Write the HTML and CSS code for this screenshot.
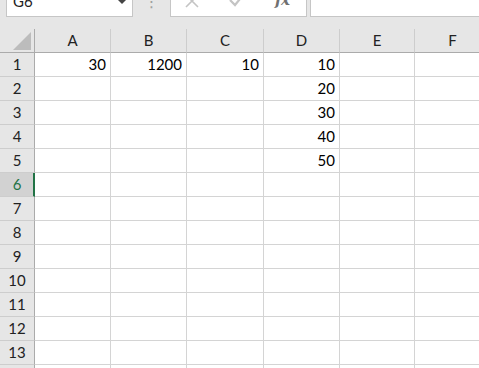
FILE: index.html
```html
<!DOCTYPE html>
<html>
<head>
<meta charset="utf-8">
<link rel="stylesheet" href="styles.css">
</head>
<body>
<div class="app">
  <div class="fbar">
    <div class="namebox"><span class="ref">G6</span><span class="caret"></span></div>
    <div class="dots">⋮</div>
    <div class="btnbox">
      <svg class="ico x" width="16" height="16" viewBox="0 0 16 16"><path d="M2 2 L14 14 M14 2 L2 14" stroke="#c4c4c4" stroke-width="1.6" fill="none"/></svg>
      <svg class="ico ok" width="18" height="16" viewBox="0 0 18 16"><path d="M2 8 L7 13 L16 2" stroke="#c4c4c4" stroke-width="2.2" fill="none"/></svg>
      <span class="fx">fx</span>
    </div>
    <div class="input"></div>
  </div>
  <div class="grid">
    <div class="corner"><span class="tri"></span></div>
    <div class="ch">A</div><div class="ch">B</div><div class="ch">C</div><div class="ch">D</div><div class="ch">E</div><div class="ch">F</div>

    <div class="rh">1</div><div class="c">30</div><div class="c">1200</div><div class="c">10</div><div class="c">10</div><div class="c"></div><div class="c"></div>
    <div class="rh">2</div><div class="c"></div><div class="c"></div><div class="c"></div><div class="c">20</div><div class="c"></div><div class="c"></div>
    <div class="rh">3</div><div class="c"></div><div class="c"></div><div class="c"></div><div class="c">30</div><div class="c"></div><div class="c"></div>
    <div class="rh">4</div><div class="c"></div><div class="c"></div><div class="c"></div><div class="c">40</div><div class="c"></div><div class="c"></div>
    <div class="rh">5</div><div class="c"></div><div class="c"></div><div class="c"></div><div class="c">50</div><div class="c"></div><div class="c"></div>
    <div class="rh sel">6</div><div class="c"></div><div class="c"></div><div class="c"></div><div class="c"></div><div class="c"></div><div class="c"></div>
    <div class="rh">7</div><div class="c"></div><div class="c"></div><div class="c"></div><div class="c"></div><div class="c"></div><div class="c"></div>
    <div class="rh">8</div><div class="c"></div><div class="c"></div><div class="c"></div><div class="c"></div><div class="c"></div><div class="c"></div>
    <div class="rh">9</div><div class="c"></div><div class="c"></div><div class="c"></div><div class="c"></div><div class="c"></div><div class="c"></div>
    <div class="rh">10</div><div class="c"></div><div class="c"></div><div class="c"></div><div class="c"></div><div class="c"></div><div class="c"></div>
    <div class="rh">11</div><div class="c"></div><div class="c"></div><div class="c"></div><div class="c"></div><div class="c"></div><div class="c"></div>
    <div class="rh">12</div><div class="c"></div><div class="c"></div><div class="c"></div><div class="c"></div><div class="c"></div><div class="c"></div>
    <div class="rh">13</div><div class="c"></div><div class="c"></div><div class="c"></div><div class="c"></div><div class="c"></div><div class="c"></div>
    <div class="rh">14</div><div class="c"></div><div class="c"></div><div class="c"></div><div class="c"></div><div class="c"></div><div class="c"></div>
  </div>
</div>
</body>
</html>
```

FILE: styles.css
```css
html, body {
  margin: 0;
  padding: 0;
  background: #e6e6e6;
  overflow: hidden;
}
.app {
  width: 479px;
  height: 368px;
  overflow: hidden;
  font-family: Lato, "Open Sans", sans-serif;
  color: #000;
}
.fbar {
  height: 29px;
  display: flex;
  align-items: flex-start;
  background: #e6e6e6;
}
.namebox {
  box-sizing: border-box;
  margin-top: -10px;
  margin-left: 6px;
  width: 127px;
  height: 27px;
  background: #fff;
  border: 1px solid #c6c6c6;
  position: relative;
  font-size: 15px;
}
.ref {
  position: absolute;
  left: 6px;
  top: 1px;
  color: #222;
}
.caret {
  position: absolute;
  left: 111px;
  top: 9px;
  width: 0;
  height: 0;
  border-left: 4px solid transparent;
  border-right: 4px solid transparent;
  border-top: 4px solid #444;
}
.dots {
  width: 37px;
  text-align: center;
  margin-top: -6px;
  color: #a0a0a0;
  font-size: 16px;
  line-height: 16px;
  font-family: "DejaVu Sans", sans-serif;
}
.btnbox {
  box-sizing: border-box;
  margin-top: -10px;
  width: 137px;
  height: 27px;
  background: #fff;
  border: 1px solid #c6c6c6;
  position: relative;
}
.ico { position: absolute; }
.x { left: 13px; top: 2px; }
.ok { left: 57px; top: 1px; }
.fx {
  position: absolute;
  left: 104px;
  top: 0px;
  font-family: "DejaVu Serif", serif;
  font-style: italic;
  font-weight: bold;
  font-size: 15px;
  color: #707070;
  letter-spacing: -0.5px;
}
.input {
  box-sizing: border-box;
  margin-top: -10px;
  margin-left: 3px;
  flex: 1;
  height: 27px;
  background: #fff;
  border: 1px solid #c6c6c6;
  border-right: none;
}
.grid {
  display: grid;
  grid-template-columns: 35px 76px 76px 77px 76px 75px 76px;
  grid-auto-rows: 24px;
  background: #fff;
}
.grid > div {
  box-sizing: border-box;
  border-right: 1px solid #d4d4d4;
  border-bottom: 1px solid #d4d4d4;
  font-size: 15px;
  line-height: 23px;
  white-space: nowrap;
}
.grid > .corner {
  background: #e6e6e6;
  border-right: 1px solid #ababab;
  border-bottom: 1px solid #ababab;
  position: relative;
}
.tri {
  position: absolute;
  right: 3px;
  bottom: 2px;
  width: 0;
  height: 0;
  border-left: 18px solid transparent;
  border-bottom: 18px solid #bcbcbc;
}
.grid > .ch {
  background: #e6e6e6;
  border-right: 1px solid #cdcdcd;
  border-bottom: 1px solid #ababab;
  text-align: center;
  color: #222;
  line-height: 22px;
}
.grid > .rh {
  background: #e6e6e6;
  border-right: 1px solid #ababab;
  border-bottom: 1px solid #cdcdcd;
  text-align: center;
  color: #222;
}
.grid > .rh.sel {
  background: #d2d2d2;
  color: #217346;
  border-right: 2px solid #217346;
  padding-left: 1px;
}
.grid > .c {
  text-align: right;
  padding-right: 4px;
}
```
